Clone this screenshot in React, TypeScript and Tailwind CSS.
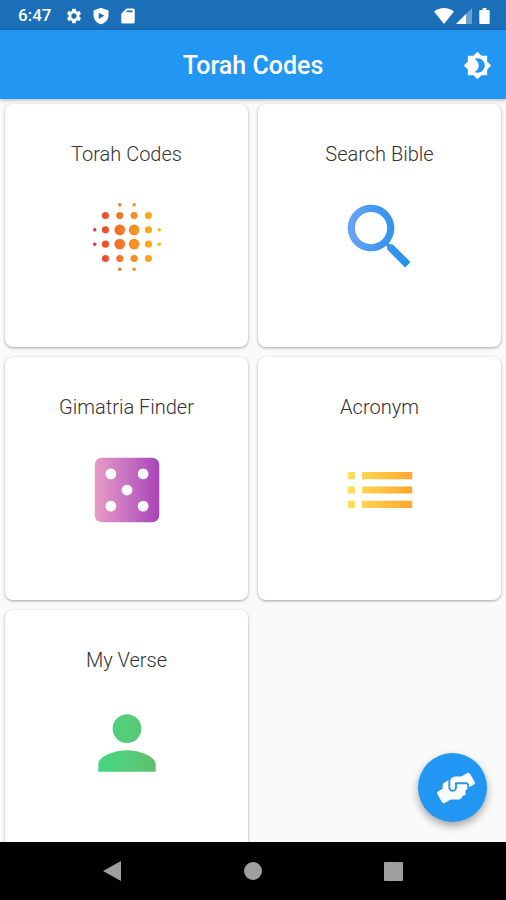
import { ReactNode } from "react";
import { FaHandsHelping } from "react-icons/fa";
import { MdBrightness4, MdSettings } from "react-icons/md";

interface GradientIconProps {
  id: string;
  from: string;
  via: string;
  to: string;
  children: ReactNode;
}

function GradientIcon({ id, from, via, to, children }: GradientIconProps) {
  return (
    <svg viewBox="0 0 24 24" className="size-[86px]" aria-hidden="true">
      <defs>
        <linearGradient
          id={id}
          gradientUnits="userSpaceOnUse"
          x1="3"
          y1="12"
          x2="21"
          y2="12"
        >
          <stop offset="0" stopColor={from} />
          <stop offset="0.5" stopColor={via} />
          <stop offset="1" stopColor={to} />
        </linearGradient>
      </defs>
      <g fill={`url(#${id})`}>{children}</g>
    </svg>
  );
}

// [cx, cy, r]
const blurDots = [
  [10, 3, 0.5],
  [14, 3, 0.5],
  [6, 6, 1],
  [10, 6, 1],
  [14, 6, 1],
  [18, 6, 1],
  [3, 10, 0.5],
  [6, 10, 1],
  [10, 10, 1.5],
  [14, 10, 1.5],
  [18, 10, 1],
  [21, 10, 0.5],
  [3, 14, 0.5],
  [6, 14, 1],
  [10, 14, 1.5],
  [14, 14, 1.5],
  [18, 14, 1],
  [21, 14, 0.5],
  [6, 18, 1],
  [10, 18, 1],
  [14, 18, 1],
  [18, 18, 1],
  [10, 21, 0.5],
  [14, 21, 0.5],
];

const menu = [
  {
    title: "Torah Codes",
    icon: (
      <GradientIcon id="codes" from="#e53a2f" via="#f6862a" to="#fbb81a">
        {blurDots.map(([cx, cy, r]) => (
          <circle key={`${cx}-${cy}`} cx={cx} cy={cy} r={r} />
        ))}
      </GradientIcon>
    ),
  },
  {
    title: "Search Bible",
    icon: (
      <GradientIcon id="search" from="#69a5f7" via="#4097f0" to="#1e90ea">
        <path d="M15.5 14h-.79l-.28-.27C15.41 12.59 16 11.11 16 9.5 16 5.91 13.09 3 9.5 3S3 5.91 3 9.5 5.91 16 9.5 16c1.61 0 3.09-.59 4.23-1.57l.27.28v.79l5 4.99L20.49 19l-4.99-5zm-6 0C7.01 14 5 11.99 5 9.5S7.01 5 9.5 5 14 7.01 14 9.5 11.99 14 9.5 14z" />
      </GradientIcon>
    ),
  },
  {
    title: "Gimatria Finder",
    icon: (
      <GradientIcon id="gimatria" from="#e79bc6" via="#c872c1" to="#a844b8">
        <rect x="3" y="3" width="18" height="18" rx="2" />
        <g fill="#fff">
          <circle cx="7.5" cy="7.5" r="1.5" />
          <circle cx="16.5" cy="7.5" r="1.5" />
          <circle cx="12" cy="12" r="1.5" />
          <circle cx="7.5" cy="16.5" r="1.5" />
          <circle cx="16.5" cy="16.5" r="1.5" />
        </g>
      </GradientIcon>
    ),
  },
  {
    title: "Acronym",
    icon: (
      <GradientIcon id="acronym" from="#ffe05c" via="#ffc445" to="#ffa52c">
        <path d="M3 13h2v-2H3v2zm0 4h2v-2H3v2zm0-8h2V7H3v2zm4 4h14v-2H7v2zm0 4h14v-2H7v2zM7 7v2h14V7H7z" />
      </GradientIcon>
    ),
  },
  {
    title: "My Verse",
    icon: (
      <GradientIcon id="verse" from="#43d67e" via="#55cd7a" to="#5fbd68">
        <path d="M12 12c2.21 0 4-1.79 4-4s-1.79-4-4-4-4 1.79-4 4 1.79 4 4 4zm0 2c-2.67 0-8 1.34-8 4v2h16v-2c0-2.66-5.33-4-8-4z" />
      </GradientIcon>
    ),
  },
];

function StatusBar() {
  return (
    <div className="flex h-[30px] shrink-0 items-center bg-[#1a6fb8] pt-px pr-4 pl-[18px] text-white">
      <span className="text-[17px] font-medium">6:47</span>
      <MdSettings className="ml-[14px] size-[18px]" />
      <svg viewBox="0 0 24 24" className="ml-[9px] size-[18px]">
        <path
          fill="currentColor"
          fillRule="evenodd"
          d="M12 1 2 4.5V11c0 5.6 4.2 10.6 10 12 5.8-1.400 10-6.400 10-12V4.500zM9 7.500v8.500l7.500-4.250z"
        />
      </svg>
      <svg viewBox="0 0 24 24" className="ml-[9px] size-[18px]">
        <path
          fill="currentColor"
          fillRule="evenodd"
          d="M10 2h9a2 2 0 0 1 2 2v16a2 2 0 0 1-2 2H5a2 2 0 0 1-2-2V9zM10 4.500v2.500h8V4.500z"
        />
      </svg>
      <svg viewBox="0 0 20 16" className="ml-auto h-4 w-5">
        <path
          fill="currentColor"
          d="M10 16 0 3.500C2.800 1.200 6.200 0 10 0s7.200 1.200 10 3.500z"
        />
      </svg>
      <svg viewBox="0 0 16 16" className="ml-[2px] size-4">
        <path fill="currentColor" opacity="0.35" d="M0 16 16 0v16z" />
        <path fill="currentColor" d="M0 16 10 6v10z" />
      </svg>
      <svg viewBox="0 0 11 17" className="ml-[7px] h-4 w-[11px]">
        <path
          fill="currentColor"
          d="M3.500 0h4v2H10a1 1 0 0 1 1 1v13a1 1 0 0 1-1 1H1a1 1 0 0 1-1-1V3a1 1 0 0 1 1-1h2.500z"
        />
      </svg>
    </div>
  );
}

function AppBar() {
  return (
    <header className="z-10 grid h-[69px] shrink-0 grid-cols-[1fr_auto_1fr] items-center bg-[#2196f3] px-[14px] pt-[2px] text-white shadow-[0_1px_4px_rgba(0,0,0,0.3)]">
      <h1 className="col-start-2 text-[25px] font-medium">Torah Codes</h1>
      <button
        type="button"
        aria-label="Toggle dark mode"
        className="justify-self-end"
      >
        <MdBrightness4 className="size-[29px]" />
      </button>
    </header>
  );
}

function NavBar() {
  return (
    <nav className="z-10 flex h-[58px] shrink-0 items-center justify-center gap-[120px] bg-black text-[#9e9e9e]">
      <button type="button" aria-label="Back">
        <svg viewBox="0 0 20 20" className="size-5">
          <path fill="currentColor" d="M18 0v20L0 10z" />
        </svg>
      </button>
      <button type="button" aria-label="Home">
        <svg viewBox="0 0 20 20" className="size-5">
          <circle fill="currentColor" cx="10" cy="10" r="9" />
        </svg>
      </button>
      <button type="button" aria-label="Recent apps">
        <svg viewBox="0 0 20 20" className="size-5">
          <rect fill="currentColor" x="1" y="1" width="19" height="19" rx="1" />
        </svg>
      </button>
    </nav>
  );
}

export default function App() {
  return (
    <div className="flex h-screen flex-col overflow-hidden bg-[#fafafa] font-[Roboto,sans-serif]">
      <StatusBar />
      <AppBar />
      <main className="relative min-h-0 flex-1">
        <div className="grid h-full grid-cols-2 content-start gap-[10px] overflow-hidden px-[5px] pt-[5px]">
          {menu.map(({ title, icon }) => (
            <button
              key={title}
              type="button"
              className="flex aspect-square flex-col items-center gap-7 rounded-lg bg-white pt-[38px] shadow-[0_1px_3px_rgba(0,0,0,0.35)]"
            >
              <span className="text-[20px] leading-6 font-light text-[#333]">
                {title}
              </span>
              {icon}
            </button>
          ))}
        </div>
        <button
          type="button"
          aria-label="Support"
          className="absolute right-[19px] bottom-5 flex size-[69px] items-center justify-center rounded-full bg-[#2196f3] pl-[6px] text-white shadow-[0_4px_8px_rgba(0,0,0,0.35)]"
        >
          <FaHandsHelping className="size-[38px]" />
        </button>
      </main>
      <NavBar />
    </div>
  );
}
